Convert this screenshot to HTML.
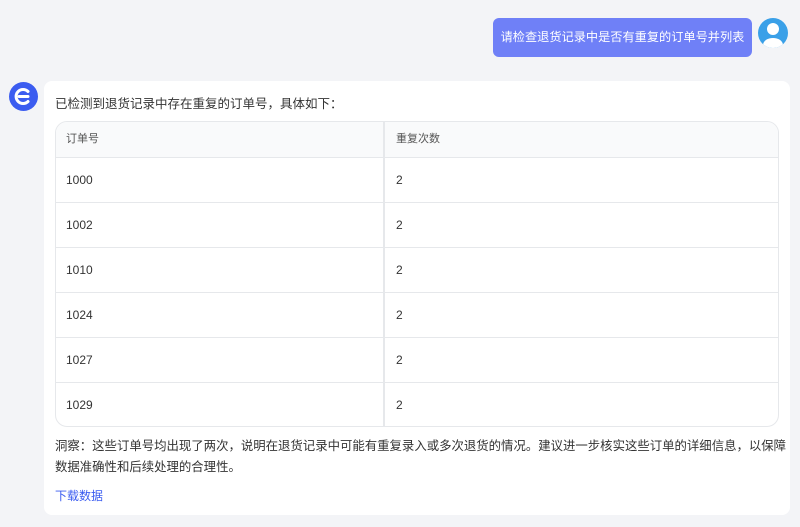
<!DOCTYPE html>
<html><head><meta charset="utf-8"><style>
*{margin:0;padding:0;box-sizing:border-box}
body{width:800px;height:527px;background:#f3f4f7;font-family:"Liberation Sans","Noto Sans CJK SC",sans-serif;color:#333;position:relative;overflow:hidden}
.bubble{position:absolute;left:493px;top:18px;width:259px;height:39px;background:#6f80f7;border-radius:6px;color:#fff;font-size:12.2px;line-height:39px;text-align:center;white-space:nowrap}
.av{position:absolute;left:758px;top:18px;width:30px;height:30px;border-radius:50%;background:#3aa0e8;overflow:hidden}
.logo{position:absolute;left:9px;top:82px;width:29px;height:29px;border-radius:50%;background:#3b5cf0}
.card{position:absolute;left:44px;top:81px;width:746px;height:434px;background:#fff;border-radius:8px}
.t{position:absolute;font-size:12.5px;color:#333}
.tbl{position:absolute;left:11px;top:40px;width:724px;height:306px;border:1px solid #e6e8eb;border-radius:12px;overflow:hidden}
.row{position:absolute;left:0;width:100%;height:45px;border-top:1px solid #e6e8eb;font-size:12px}
.row span{position:absolute;top:0;line-height:44px}
.c1{left:10px}.c2{left:340px}
.split{position:absolute;left:327px;top:0;width:2px;height:100%;background:#e6e8eb}
</style></head><body>
<div class="bubble">请检查退货记录中是否有重复的订单号并列表</div>
<div class="av"><svg width="30" height="30"><circle cx="15" cy="11" r="6" fill="#fff"/><ellipse cx="15" cy="27" rx="10" ry="7" fill="#fff"/></svg></div>
<div class="logo"><svg width="29" height="29"><path d="M19 9.5 A7 7 0 1 0 19 19.5" stroke="#fff" stroke-width="3" fill="none" stroke-linecap="round"/><path d="M10 14.5 H19" stroke="#fff" stroke-width="3" stroke-linecap="round"/></svg></div>
<div class="card">
<div class="t" style="left:11px;top:12px">已检测到退货记录中存在重复的订单号，具体如下：</div>
<div class="tbl">
<div style="position:absolute;left:0;top:0;width:100%;height:35px;background:#f9fafb;font-size:11px;color:#555"><span style="position:absolute;left:10px;line-height:35px">订单号</span><span style="position:absolute;left:340px;line-height:35px">重复次数</span></div>
<div class="row" style="top:35px"><span class="c1">1000</span><span class="c2">2</span></div>
<div class="row" style="top:80px"><span class="c1">1002</span><span class="c2">2</span></div>
<div class="row" style="top:125px"><span class="c1">1010</span><span class="c2">2</span></div>
<div class="row" style="top:170px"><span class="c1">1024</span><span class="c2">2</span></div>
<div class="row" style="top:215px"><span class="c1">1027</span><span class="c2">2</span></div>
<div class="row" style="top:260px"><span class="c1">1029</span><span class="c2">2</span></div>
<div class="split"></div>
</div>
<div class="t" style="left:11px;top:355px;white-space:nowrap;line-height:21px;font-size:12.4px">洞察：这些订单号均出现了两次，说明在退货记录中可能有重复录入或多次退货的情况。建议进一步核实这些订单的详细信息，以保障<br>数据准确性和后续处理的合理性。</div>
<div class="t" style="left:11px;top:406px;color:#3b5cf0;font-size:12px">下载数据</div>
</div>
</body></html>
